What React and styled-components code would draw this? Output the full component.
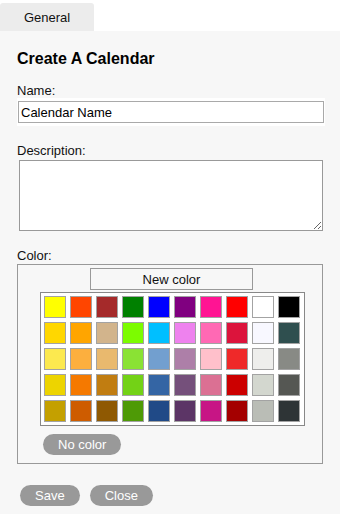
import React, { useState } from 'react';
import styled, { createGlobalStyle } from 'styled-components';

const GlobalStyle = createGlobalStyle`
  html, body {
    margin: 0;
    padding: 0;
    background: #ffffff;
    font-family: "Liberation Sans", Arial, sans-serif;
    font-size: 13px;
    color: #111;
  }
`;

const palette = [
  ['#ffff00', '#ff4500', '#a52a2a', '#008000', '#0000ff', '#800080', '#ff1493', '#ff0000', '#ffffff', '#000000'],
  ['#ffd700', '#ffa500', '#d2b48c', '#7cfc00', '#00bfff', '#ee82ee', '#ff69b4', '#dc143c', '#f8f8ff', '#2f4f4f'],
  ['#fce94f', '#fcaf3e', '#e9b96e', '#8ae234', '#729fcf', '#ad7fa8', '#ffc0cb', '#ef2929', '#eeeeec', '#888a85'],
  ['#edd400', '#f57900', '#c17d11', '#73d216', '#3465a4', '#75507b', '#db7093', '#cc0000', '#d3d7cf', '#555753'],
  ['#c4a000', '#ce5c00', '#8f5902', '#4e9a06', '#204a87', '#5c3566', '#c71585', '#a40000', '#babdb6', '#2e3436'],
];

const Page = styled.div`
  display: flex;
  flex-direction: column;
  min-height: 514px;
`;

const TabBar = styled.div`
  display: flex;
  height: 31px;
  align-items: flex-end;
`;

const Tab = styled.div`
  width: 94px;
  height: 28px;
  background: #ececec;
  border-radius: 3px 3px 0 0;
  display: flex;
  align-items: center;
  justify-content: center;
  font-size: 13px;
  color: #111;
`;

const Panel = styled.div`
  flex: 1;
  background: #f7f7f7;
  padding: 19px 0 0 17px;
`;

const Title = styled.h2`
  margin: 0 0 15px;
  font-size: 16px;
  line-height: 18px;
  font-weight: bold;
  color: #000;
`;

const Label = styled.div`
  font-size: 13px;
  line-height: 15px;
  color: #111;
`;

const InputWrap = styled.div`
  width: 306px;
  background: #ffffff;
  padding: 3px 1px;
`;

const Input = styled.input`
  display: block;
  box-sizing: border-box;
  width: 306px;
  height: 22px;
  margin: 0;
  padding: 0 2px;
  border: 1px solid #a9a9a9;
  background: #fff;
  font-family: inherit;
  font-size: 13px;
  color: #000;
  outline: none;
`;

const Field = styled.div`
  margin-top: ${p => p.$gap}px;
`;

const TextArea = styled.textarea`
  display: block;
  box-sizing: border-box;
  width: 304px;
  height: 71px;
  margin: 2px 0 0 2px;
  border: 1px solid #999;
  background: #fff;
  font-family: inherit;
  font-size: 13px;
  resize: both;
  outline: none;
`;

const ColorBox = styled.div`
  box-sizing: border-box;
  width: 306px;
  height: 200px;
  margin-top: 1px;
  border: 1px solid #999;
  padding-top: 3px;
  display: flex;
  flex-direction: column;
`;

const NewColor = styled.button`
  align-self: flex-start;
  margin-left: 72px;
  box-sizing: border-box;
  width: 163px;
  height: 22px;
  border: 1px solid #999;
  background: #f7f7f7;
  font-family: inherit;
  font-size: 13px;
  color: #111;
  padding: 0;
`;

const Grid = styled.div`
  margin: 2px 0 0 22px;
  width: 256px;
  padding: 3px 4px 3px 3px;
  border: 1px solid #888;
  background: #fff;
  display: grid;
  grid-template-columns: repeat(10, 22px);
  grid-auto-rows: 22px;
  gap: 4px;
`;

const Swatch = styled.div`
  box-sizing: border-box;
  border: 1px solid #a3a3a3;
  background: ${p => p.$color};
  cursor: pointer;
  outline: ${p => (p.$active ? '1px solid #333' : 'none')};
`;

const Pill = styled.button`
  height: 21px;
  padding: 0 15px;
  border: none;
  border-radius: 11px;
  background: #999;
  color: #fff;
  font-family: inherit;
  font-size: 13px;
  line-height: 21px;
`;

const NoColor = styled(Pill)`
  align-self: flex-start;
  margin: 8px 0 0 25px;
`;

const Actions = styled.div`
  display: flex;
  gap: 10px;
  margin: 21px 0 0 3px;
`;

const App = () => {
  const [name, setName] = useState('Calendar Name');
  const [color, setColor] = useState(null);

  return (
    <Page>
      <GlobalStyle />
      <TabBar>
        <Tab>General</Tab>
      </TabBar>
      <Panel>
        <Title>Create A Calendar</Title>
        <Label>Name:</Label>
        <InputWrap>
          <Input value={name} onChange={e => setName(e.target.value)} />
        </InputWrap>
        <Field $gap={17}>
          <Label>Description:</Label>
          <TextArea />
        </Field>
        <Field $gap={17}>
          <Label>Color:</Label>
          <ColorBox>
            <NewColor>New color</NewColor>
            <Grid>
              {palette.flat().map((c, i) => (
                <Swatch key={i} $color={c} $active={color === c} onClick={() => setColor(c)} />
              ))}
            </Grid>
            <NoColor onClick={() => setColor(null)}>No color</NoColor>
          </ColorBox>
        </Field>
        <Actions>
          <Pill>Save</Pill>
          <Pill>Close</Pill>
        </Actions>
      </Panel>
    </Page>
  );
};

export default App;
